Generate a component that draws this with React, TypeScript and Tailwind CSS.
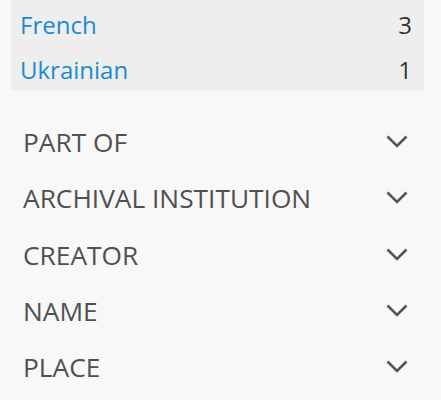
import React from "react";

const Chevron = () => (
  <svg width="22" height="14" viewBox="0 0 22 14" fill="none">
    <path d="M1.5 1.5 L11 11 L20.5 1.5" stroke="#555555" strokeWidth="2.6" strokeLinecap="butt" strokeLinejoin="miter" />
  </svg>
);

const langs = [
  { name: "French", count: 3 },
  { name: "Ukrainian", count: 1 },
];

const sections = ["PART OF", "ARCHIVAL INSTITUTION", "CREATOR", "NAME", "PLACE"];

export default function App() {
  return (
    <div className="w-[441px] h-[400px] bg-[#f8f8f8] overflow-hidden" style={{ fontFamily: '"Open Sans", sans-serif' }}>
      <div className="ml-[11px] w-[413px] h-[91px] bg-[#eeeeee] pl-[9px] pr-[12px] flex flex-col">
        {langs.map((l) => (
          <div key={l.name} className="h-[45px] flex items-center justify-between text-[24px] leading-none pt-[4px]">
            <span className="text-[#1a8ccf]">{l.name}</span>
            <span className="text-[#333333]">{l.count}</span>
          </div>
        ))}
      </div>
      <div className="pt-[23px] flex flex-col">
        {sections.map((s) => (
          <div key={s} className="h-[56.3px] flex items-center justify-between pl-[23px] pr-[33px]">
            <span className="text-[26.3px] leading-none text-[#505050]">{s}</span>
            <Chevron />
          </div>
        ))}
      </div>
    </div>
  );
}
